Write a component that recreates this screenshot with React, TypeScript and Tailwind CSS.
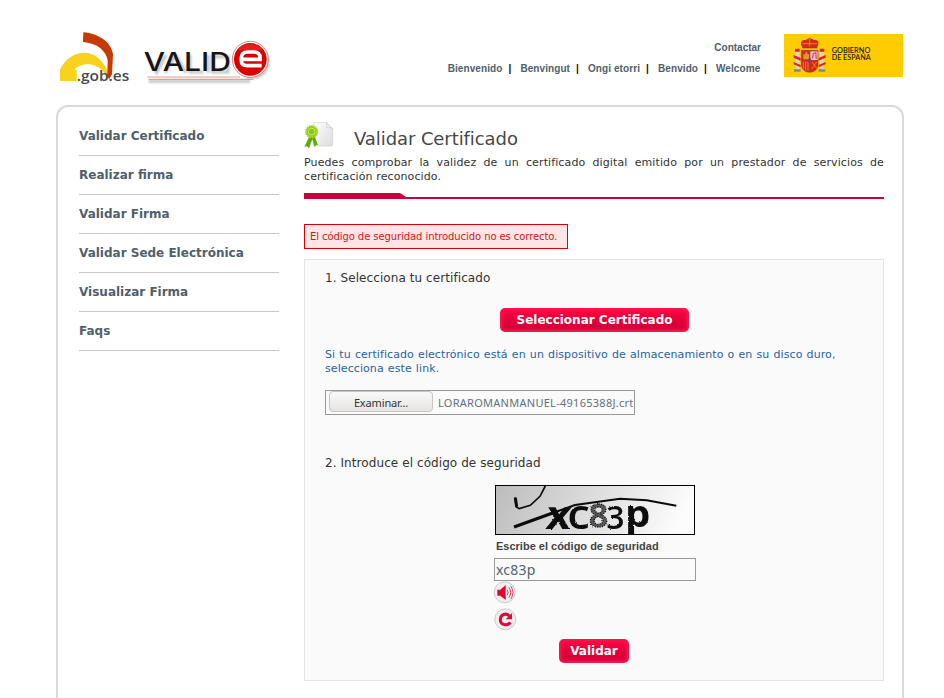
import React from "react";

const menu = [
  "Validar Certificado",
  "Realizar firma",
  "Validar Firma",
  "Validar Sede Electrónica",
  "Visualizar Firma",
  "Faqs",
];

const languages = ["Bienvenido", "Benvingut", "Ongi etorri", "Benvido", "Welcome"];

function Logos() {
  return (
    <svg width="230" height="70" viewBox="0 0 690 210" className="block shrink-0">
      <defs>
        <filter id="soft" x="-10%" y="-20%" width="120%" height="150%">
          <feGaussianBlur stdDeviation="3" />
        </filter>
      </defs>
      <path d="M30 168V134C48 96 82 80 114 84C142 90 164 112 180 152L172 154C154 128 132 115 108 118C84 122 74 130 75 136L80 134V168Z" fill="#f8d21c" />
      <path d="M100 22C148 26 184 52 189 88L186 148L178 162L172 156L173 106C168 76 140 54 99 51Z" fill="#c73a06" />
      <text x="80" y="168" fontFamily="'Open Sans', sans-serif" fontWeight="600" fontSize="43" fill="#4b4b4b" textLength="158" lengthAdjust="spacingAndGlyphs">.gob.es</text>
      <g filter="url(#soft)" opacity=".35">
        <path d="M291 90L320 143L348 90M346 143L377 90L408 143M420 90V141H460M474 90V143M488 90V141H534V95H488" fill="none" stroke="#555" strokeWidth="9" />
        <circle cx="609" cy="112" r="50" fill="#666" />
        <path d="M296 169H600" stroke="#555" strokeWidth="9" />
      </g>
      <path d="M292 156H570M296 163H610" stroke="#cf6a58" strokeWidth="2" />
      <text x="281" y="138" fontFamily="Inter, sans-serif" fontWeight="500" fontSize="78" fill="#161616" textLength="262" lengthAdjust="spacingAndGlyphs">VALID</text>
      <circle cx="601" cy="103" r="54" fill="#fff" stroke="#ce4b3b" strokeWidth="2" />
      <circle cx="601" cy="103" r="49" fill="#d90000" />
      <path d="M566 70Q600 44 637 70V76H566Z" fill="#ef3838" opacity=".55" />
      <path d="M635 122H593Q574 122 574 108V98Q574 81 593 81H611Q630 81 630 98V103H576" fill="none" stroke="#fff" strokeWidth="11" />
    </svg>
  );
}

function SpanishEmblem() {
  return (
    <svg width="119" height="43" viewBox="0 0 357 129" className="block shrink-0 bg-[#ffcc00]">
      <g fill="#d42a1e">
        <path d="M51 32Q49 17 64 18L77 12L91 18Q106 17 103 32L98 42H56Z" />
        <path d="M35 53H46V106H35ZM108 53H119V106H108Z" fill="#ddd2c6" />
        <path d="M29 63L50 72V80L29 71ZM29 84L50 93V100L29 91ZM125 63L104 72V80L125 71ZM125 84L104 93V100L125 91Z" />
        <path d="M33 44H47V53H33ZM107 44H121V53H107Z" />
        <path d="M52 49H102V94Q99 114 77 115Q55 114 52 94Z" stroke="#914235" strokeWidth="2" />
      </g>
      <path d="M56 29H99M77 14V37" stroke="#d58d25" strokeWidth="3" />
      <path d="M55 41H100" stroke="#87462d" strokeWidth="4" />
      <path d="M58 76V61H64V55H70V61H75V76Z" fill="#d99d29" />
      <path d="M79 52H101V78H79Z" fill="#eac3c3" />
      <path d="M85 74L88 60L95 56L97 75" fill="none" stroke="#cf547e" strokeWidth="4" />
      <path d="M58 83V104M65 83V109M72 83V111" stroke="#ecb521" strokeWidth="2" />
      <path d="M84 84L98 103M98 84L83 105" stroke="#efa722" strokeWidth="2" />
      <ellipse cx="77" cy="80" rx="5" ry="7" fill="#8c3b5c" />
      <path d="M30 106H50V113H30ZM104 106H124V113H104Z" fill="#7b8d87" />
      <g fontFamily="Lato, sans-serif" fontWeight="600" fontSize="22" fill="#292000">
        <text x="143" y="56" textLength="116" lengthAdjust="spacingAndGlyphs">GOBIERNO</text>
        <text x="143" y="79" textLength="117" lengthAdjust="spacingAndGlyphs">DE ESPAÑA</text>
      </g>
    </svg>
  );
}

function CertificateIcon() {
  return (
    <svg width="30" height="28" viewBox="0 0 90 84" className="block shrink-0">
      <defs>
        <linearGradient id="sheet" x2="1" y2="1">
          <stop stopColor="#fff" />
          <stop offset="1" stopColor="#dcdce0" />
        </linearGradient>
      </defs>
      <path d="M29 3Q29 1 33 1H66L86 20V68Q86 72 82 72H31Q27 72 27 67Z" fill="url(#sheet)" stroke="#d0d0d0" strokeWidth="2" />
      <path d="M66 2Q71 9 67 18Q78 14 85 20Z" fill="#f6f6f6" stroke="#ccc" strokeWidth="2" />
      <path d="M15 44L1 76L9 73L15 79L25 52L32 76L36 68L42 70L32 43Z" fill="#62a909" />
      <circle cx="23" cy="29" r="17" fill="#8ccb16" stroke="#a4d932" strokeWidth="6" strokeDasharray="5 2" />
      <circle cx="23" cy="29" r="10" fill="#86c916" stroke="#d0ed62" strokeWidth="3" />
    </svg>
  );
}

function Captcha() {
  return (
    <svg width="200" height="50" viewBox="0 0 600 150" className="block">
      <defs>
        <linearGradient id="captcha-shade" x1="0" y1="0" x2="1" y2=".12">
          <stop stopColor="#bcbcbc" />
          <stop offset="1" stopColor="#fcfcfc" />
        </linearGradient>
        <filter id="rough" x="-10%" y="-20%" width="120%" height="140%">
          <feTurbulence type="fractalNoise" baseFrequency=".35" numOctaves="1" />
          <feDisplacementMap in="SourceGraphic" scale="7" xChannelSelector="R" yChannelSelector="G" />
        </filter>
      </defs>
      <rect x="1.5" y="1.5" width="597" height="147" fill="url(#captcha-shade)" stroke="#000" strokeWidth="3" />
      <g fill="none" stroke="#0b0b0b">
        <path d="M60 37L64 66L73 71L106 61L135 34L151 3" strokeWidth="5" />
        <path d="M61 38L65 65" strokeWidth="9" />
        <path d="M57 126L173 84" strokeWidth="10" />
        <path d="M173 84L240 60L375 41L455 46L544 62" strokeWidth="6" />
      </g>
      <g fontFamily="'Open Sans', sans-serif" fill="#111" filter="url(#rough)">
        <text transform="translate(150 131) skewX(-7)" fontWeight="700" fontSize="120" textLength="74" lengthAdjust="spacingAndGlyphs">x</text>
        <text x="217" y="132" fontWeight="600" fontSize="122" textLength="68" lengthAdjust="spacingAndGlyphs">c</text>
        <text x="282" y="125" fontWeight="600" fontSize="100" fillOpacity=".65" stroke="#111" strokeWidth="4" strokeDasharray="4 3">8</text>
        <text x="334" y="131" fontWeight="600" fontSize="96">3</text>
        <text x="390" y="127" fontWeight="700" fontSize="114" textLength="76" lengthAdjust="spacingAndGlyphs">p</text>
      </g>
    </svg>
  );
}

function RoundButton({ kind }: { kind: "sound" | "reload" }) {
  return (
    <svg width="24" height="24" viewBox="0 0 72 72" className="block">
      {kind === "sound" ? (
        <g>
          <circle cx="35" cy="34" r="31.5" fill="#eee" stroke="#cbcbcb" strokeWidth="3" />
          <path d="M13 26H22L38 12V57L22 44H13Z" fill="#e4002f" />
          <path d="M43 26Q48 34 43 43M48 19Q58 34 48 50M54 16Q66 34 54 54" fill="none" stroke="#e52b4d" strokeWidth="2.8" />
        </g>
      ) : (
        <g>
          <circle cx="37" cy="37" r="31.5" fill="#eee" stroke="#cbcbcb" strokeWidth="3" />
          <path d="M49 27C40 17 22 21 22 38C22 55 44 58 52 46" fill="none" stroke="#de0935" strokeWidth="9" />
          <path d="M57 18V37H38Z" fill="#de0935" />
        </g>
      )}
    </svg>
  );
}

function RedButton({ children, className }: { children: React.ReactNode; className: string }) {
  return (
    <button
      className={`${className} block h-6 rounded-[5px] border-2 border-[#f31547] bg-linear-to-b from-[#ff0040] to-[#cc0037] pb-px text-[12px] leading-[18px] font-bold text-white shadow-[inset_0_0_4px_#ff1850]`}
    >
      {children}
    </button>
  );
}

export default function App() {
  return (
    <div className="flex h-[698px] w-[944px] flex-col overflow-hidden bg-white font-['DejaVu_Sans',sans-serif] text-[#333]">
      <header className="flex h-[105px] shrink-0 items-start pl-[50px]">
        <div className="pt-[25px]"><Logos /></div>
        <div className="w-[481px] pt-[41px] text-right font-['Liberation_Sans',sans-serif] text-[10px] leading-[13px] font-bold text-[#50606a]">
          <div>Contactar</div>
          <nav className="mt-2 mr-[0.7px] flex justify-end tracking-[0.08px]">
            {languages.map((language, i) => (
              <React.Fragment key={language}>
                {i > 0 && <span className="mr-[9px] ml-[6px] w-[3px] text-center text-[#111]">|</span>}
                <a>{language}</a>
              </React.Fragment>
            ))}
          </nav>
        </div>
        <div className="ml-[23px] pt-[34px]"><SpanishEmblem /></div>
      </header>

      <main className="ml-[56px] flex h-[700px] w-[848px] shrink-0 rounded-t-[12px] border-2 border-[#d9d9d9]">
        <nav className="mt-[10px] ml-[21px] w-[200px] shrink-0">
          {menu.map((item) => (
            <a key={item} className="block h-[39px] border-b border-[#c8c8c8] text-[12px] leading-[38px] font-bold text-[#50606a]">
              {item}
            </a>
          ))}
        </nav>

        <section className="ml-[25px] w-[580px] shrink-0 pt-[15px]">
          <div className="flex h-[34px]">
            <CertificateIcon />
            <h1 className="ml-5 text-[18px] leading-[33px] tracking-[-0.08px] text-[#484848]">Validar Certificado</h1>
          </div>
          <p className="text-justify text-[11px] leading-[14px] tracking-[0.11px]">
            Puedes comprobar la validez de un certificado digital emitido por un prestador de servicios de certificación reconocido.
          </p>
          <svg width="580" height="6" className="mt-[9px] block">
            <path d="M0 0H96L102 4H580V6H0Z" fill="#ca0039" />
          </svg>

          <div className="mt-[25px] h-[25px] w-[264px] border border-[#d90000] bg-[#ffe5e5] pl-[5px] text-[10px] leading-[23px] tracking-[-0.08px] whitespace-nowrap text-[#d51717]">
            El código de seguridad introducido no es correcto.
          </div>

          <div className="mt-[10px] h-[422px] border border-[#e4e4e4] bg-[#fafafa] px-5 pt-[10px]">
            <h2 className="text-[12px] leading-4 tracking-[0.08px]">1. Selecciona tu certificado</h2>
            <RedButton className="mt-[22px] ml-[175px] w-[189px]">Seleccionar Certificado</RedButton>
            <p className="mt-[16px] text-[11px] leading-[14px] tracking-[0.08px] text-[#2a629f] [word-spacing:0.55px]">
              Si tu certificado electrónico está en un dispositivo de almacenamiento o en su disco duro, selecciona este link.
            </p>
            <div className="mt-[14px] flex h-[25px] w-[310px] overflow-hidden border border-[#999] pl-[3px] font-['Noto_Sans',sans-serif] whitespace-nowrap">
              <button className="h-[21px] w-[104px] shrink-0 rounded-[4px] border border-[#c9c4bf] bg-linear-to-b from-[#f9f9f9] to-[#e6e5e3] pt-px text-[11px] leading-5 tracking-[-0.15px]">Examinar...</button>
              <span className="ml-[5px] text-[11px] leading-[24px] tracking-[0.27px] text-[#64717a]">LORAROMANMANUEL-49165388J.crt</span>
            </div>

            <h2 className="mt-10 text-[12px] leading-4 tracking-[0.08px]">2. Introduce el código de seguridad</h2>
            <div className="mt-[14px] ml-[170px]"><Captcha /></div>
            <label className="mt-1 ml-[171px] block font-['Liberation_Sans',sans-serif] text-[11px] leading-[15px] font-bold text-[#444]">Escribe el código de seguridad</label>
            <div className="mt-1 ml-[169px] h-[23px] w-[202px] border border-[#999] bg-[#fafafa] pl-px font-['Noto_Sans',sans-serif] text-[14px] leading-[22px] tracking-[0.2px] text-[#52646f]">xc83p</div>
            <div className="ml-[168px]"><RoundButton kind="sound" /></div>
            <div className="mt-[2px] ml-[168px]"><RoundButton kind="reload" /></div>
            <RedButton className="mt-[8px] ml-[234px] w-[70px]">Validar</RedButton>
          </div>
        </section>
      </main>
    </div>
  );
}
